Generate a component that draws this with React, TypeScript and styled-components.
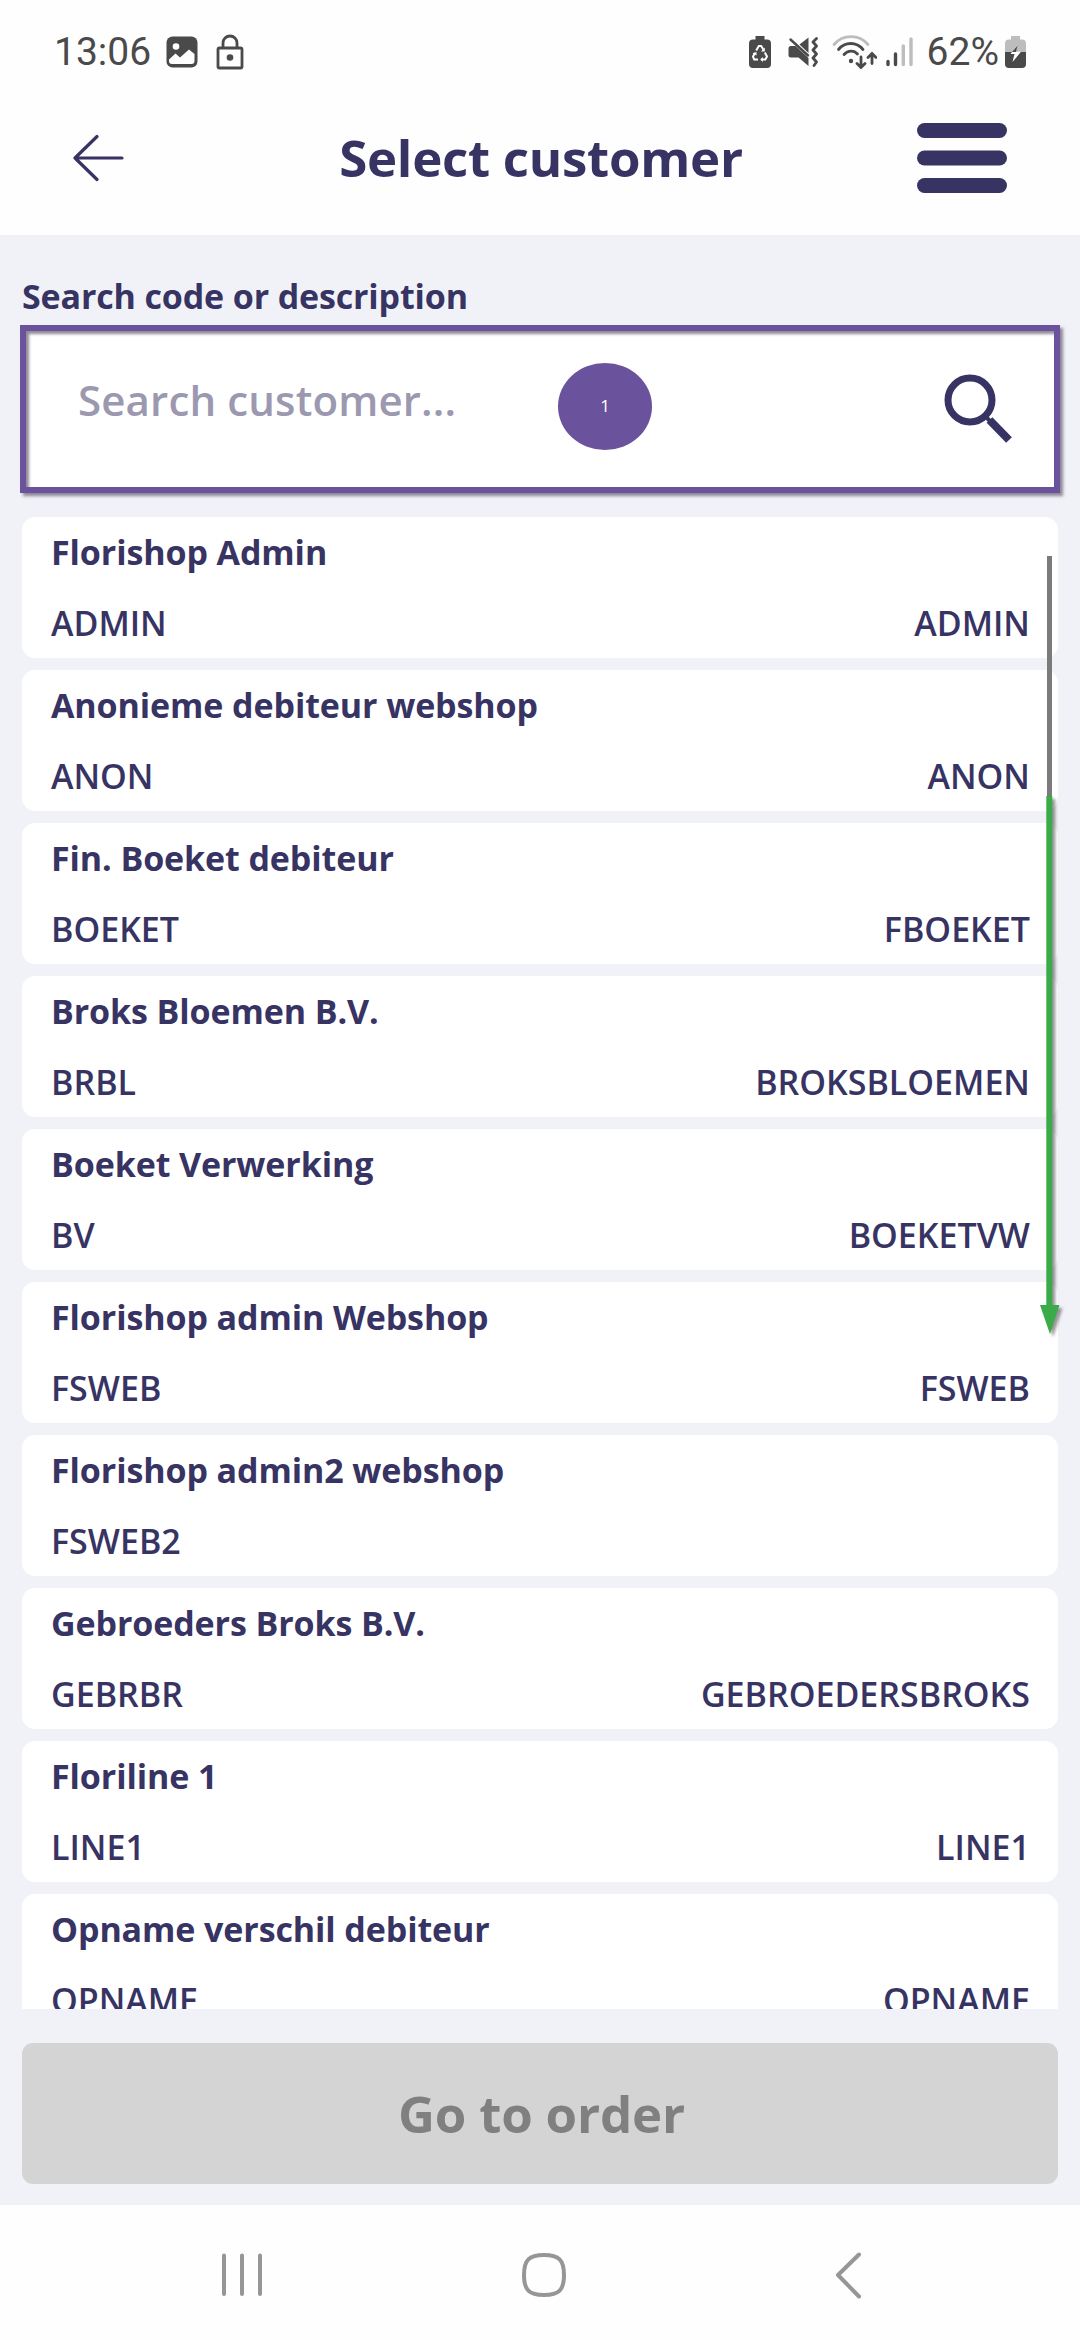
import React from 'react';
import styled, { createGlobalStyle } from 'styled-components';

const ink = '#373363';
const purple = '#6b529c';
const status = '#4a4a4a';
const faded = '#bdbdbd';

const GlobalStyle = createGlobalStyle`
  * { box-sizing: border-box; }
  body { margin: 0; background: #fff; }
`;

const Screen = styled.div`
  width: 1080px;
  height: 2340px;
  display: flex;
  flex-direction: column;
  overflow: hidden;
  background: #fefefe;
  color: ${ink};
  font-family: 'Open Sans', 'Noto Sans', sans-serif;
`;

const StatusBar = styled.div`
  height: 103px;
  padding: 0 54px 0 54px;
  display: flex;
  align-items: center;
  justify-content: space-between;
  font-family: Roboto, sans-serif;
  font-size: 39px;
  line-height: 48px;
  color: ${status};
`;

const StatusGroup = styled.div`
  display: flex;
  align-items: center;
  svg { display: block; flex: none; }
`;

const Spacer = styled.span<{ $w: number }>`
  width: ${(p) => p.$w}px;
  flex: none;
`;

const TitleBar = styled.header`
  height: 132px;
  padding: 0 73px 22px;
  display: flex;
  align-items: center;
  justify-content: space-between;
`;

const IconButton = styled.button`
  width: 90px;
  height: 72px;
  padding: 0;
  border: 0;
  background: none;
  display: flex;
  align-items: center;
`;

const Title = styled.h1`
  margin: 0 0 2px 2px;
  font-size: 51px;
  line-height: 70px;
  font-weight: 700;
  letter-spacing: -0.27px;
`;

const Main = styled.main`
  height: 1970px;
  padding: 42px 22px 21px;
  display: flex;
  flex-direction: column;
  background: #f1f2f8;
`;

const Label = styled.label`
  height: 48px;
  font-size: 34px;
  line-height: 38px;
  font-weight: 700;
  letter-spacing: -0.14px;
`;

const SearchBox = styled.div`
  position: relative;
  height: 168px;
  margin: 0 -2px;
  padding: 0 42px 0 52px;
  border: 6px solid ${purple};
  background: #fff;
  box-shadow: 3px 3px 3px rgba(70, 60, 80, 0.6), inset 3px 3px 3px rgba(70, 60, 80, 0.6);
  display: flex;
  justify-content: space-between;
`;

const Placeholder = styled.span`
  padding-top: 40px;
  font-size: 42px;
  line-height: 58px;
  font-weight: 560;
  letter-spacing: 0.15px;
  color: #9b98b0;
`;

const SearchIcon = styled.svg`
  display: block;
  margin-top: 43px;
`;

const Marker = styled.span`
  position: absolute;
  left: 532px;
  top: 32px;
  width: 94px;
  height: 87px;
  padding-bottom: 2px;
  border-radius: 50%;
  background: ${purple};
  color: #fff;
  font-size: 17px;
  font-weight: 500;
  display: flex;
  align-items: center;
  justify-content: center;
`;

const ListArea = styled.section`
  position: relative;
  height: 1492px;
  margin-top: 24px;
`;

const List = styled.ul`
  height: 100%;
  margin: 0;
  padding: 0;
  overflow: hidden;
  list-style: none;
  display: flex;
  flex-direction: column;
  gap: 12px;
`;

const Card = styled.li`
  flex: none;
  height: 141px;
  padding: 12px 28px 0 29px;
  border-radius: 13px;
  background: #fff;
  font-size: 34px;
  line-height: 46px;
`;

const Name = styled.div`
  height: 71px;
  font-weight: 700;
  letter-spacing: -0.1px;
`;

const Codes = styled.div`
  display: flex;
  justify-content: space-between;
  font-weight: 550;
`;

const ScrollThumb = styled.div`
  position: absolute;
  left: 1025px;
  top: 39px;
  width: 5px;
  height: 242px;
  background: #7b7b7b;
`;

const ScrollArrow = styled.svg`
  position: absolute;
  left: 1016px;
  top: 278px;
  filter: drop-shadow(3px 3px 1.5px rgba(70, 60, 70, 0.55));
`;

const OrderButton = styled.button`
  height: 141px;
  margin-top: 34px;
  padding: 0 0 2px 3px;
  border: 0;
  border-radius: 11px;
  background: #d4d4d4;
  color: #808080;
  font-family: inherit;
  font-size: 51px;
  font-weight: 700;
  letter-spacing: -0.2px;
`;

const NavBar = styled.nav`
  flex: 1;
  display: flex;
  justify-content: space-between;
  padding: 46px 217px 0 220px;
`;

const HomeIcon = styled.svg`
  margin-right: 11px;
`;

const customers: [string, string, string][] = [
  ['Florishop Admin', 'ADMIN', 'ADMIN'],
  ['Anonieme debiteur webshop', 'ANON', 'ANON'],
  ['Fin. Boeket debiteur', 'BOEKET', 'FBOEKET'],
  ['Broks Bloemen B.V.', 'BRBL', 'BROKSBLOEMEN'],
  ['Boeket Verwerking', 'BV', 'BOEKETVW'],
  ['Florishop admin Webshop', 'FSWEB', 'FSWEB'],
  ['Florishop admin2 webshop', 'FSWEB2', ''],
  ['Gebroeders Broks B.V.', 'GEBRBR', 'GEBROEDERSBROKS'],
  ['Floriline 1', 'LINE1', 'LINE1'],
  ['Opname verschil debiteur', 'OPNAME', 'OPNAME'],
];

const PictureIcon = () => (
  <svg width="32" height="32" viewBox="0 0 32 32">
    <rect x="0.5" y="0.5" width="31" height="31" rx="6" fill={status} />
    <circle cx="10" cy="10.5" r="3.3" fill="#fff" />
    <path d="M3 23.5 L9.5 17.5 L14 21.5 L23 13.5 L28.5 18 V25 Q28.5 28 25.5 28 H6 Q3 28 3 25 Z" fill="#fff" />
  </svg>
);

const LockIcon = () => (
  <svg width="28" height="36" viewBox="0 0 28 36" fill="none" stroke={status} strokeWidth="2.8">
    <rect x="2" y="14" width="24" height="20" rx="1.5" />
    <path d="M7 14 V9 A7 7 0 0 1 21 9 V14" />
    <circle cx="14" cy="23.5" r="3.3" fill={status} stroke="none" />
  </svg>
);

const RecycleBatteryIcon = () => (
  <svg width="22" height="32" viewBox="0 0 22 32">
    <path d="M6.5 0 H15.5 V3.5 H18 Q22 3.5 22 7.5 V28 Q22 32 18 32 H4 Q0 32 0 28 V7.5 Q0 3.5 4 3.5 H6.5 Z" fill={status} />
    <g fill="none" stroke="#fff" strokeWidth="2">
      <path d="M7.2 14.5 L9.8 10 H12.2 L14.3 13.6" />
      <path d="M15.8 16.5 L18 20.5 L16.3 23.5 H12.8" />
      <path d="M9 23.5 H5.2 L4 20.5 L6 17" />
    </g>
    <path d="M15.8 11.5 V15.5 H12 Z M13.8 21 V26 L11.2 23.5 Z M3.5 17.2 L7.5 16 V19.5 Z" fill="#fff" />
  </svg>
);

const MutedIcon = () => (
  <svg width="30" height="30" viewBox="0 0 30 30">
    <path d="M3 9 H7.5 L20.5 21 V29 L10.5 20.5 H3 Q0.5 20.5 0.5 18 V11.5 Q0.5 9 3 9 Z M11.5 7.5 L20.5 0.5 V16 Z" fill={status} />
    <path d="M2.5 2.5 L20 18.5" stroke={status} strokeWidth="2.4" strokeLinecap="round" />
    <path d="M28.5 1.5 L25 5 L28.5 9 L25 13 L28.5 17 L25 21 L28.5 25 L26 28.5" fill="none" stroke={status} strokeWidth="2.8" strokeLinejoin="round" strokeLinecap="round" />
  </svg>
);

const WifiIcon = () => (
  <svg width="45" height="34" viewBox="0 0 45 34" fill="none" strokeWidth="2.8" strokeLinecap="round">
    <path d="M2 9.5 C11 -1 27 -1 36 9.5" stroke={faded} />
    <g stroke={status}>
      <path d="M6.5 14.5 C13 6.5 24.5 6.5 31 14.5" />
      <path d="M12 19.5 C16 15 22 15 25.5 19" />
      <path d="M29 22 V32 M25 28.5 L29 32.5 L33 28.5" />
      <path d="M40 28.5 V19 M36 22.5 L40 18.5 L44 22.5" />
    </g>
    <circle cx="19" cy="26" r="2.2" fill={status} />
  </svg>
);

const SignalIcon = () => (
  <svg width="27" height="30" viewBox="0 0 27 30" strokeWidth="3.4" strokeLinecap="round">
    <path d="M2 24.5 V27.5 M9.5 17 V27.5" stroke={status} />
    <path d="M17.3 9 V27.5 M25 2 V27.5" stroke={faded} />
  </svg>
);

const ChargingIcon = () => (
  <svg width="21" height="32" viewBox="0 0 21 32">
    <path d="M6 0 H15 V3.5 H17 Q21 3.5 21 7.5 V16 H0 V7.5 Q0 3.5 4 3.5 H6 Z" fill={faded} />
    <path d="M0 16 H21 V28 Q21 32 17 32 H4 Q0 32 0 28 Z" fill={status} />
    <path d="M12 9.5 L5.5 18 H9.5 L7.5 26 L16 15.8 H11 Z" fill="#fff" />
    <path d="M12.5 9.5 L7 16 H11 Z" fill={status} />
  </svg>
);

export default function App() {
  return (
    <>
      <GlobalStyle />
      <Screen>
        <StatusBar>
          <StatusGroup>
            <span>13:06</span>
            <Spacer $w={15} />
            <PictureIcon />
            <Spacer $w={18} />
            <LockIcon />
          </StatusGroup>
          <StatusGroup>
            <RecycleBatteryIcon />
            <Spacer $w={17} />
            <MutedIcon />
            <Spacer $w={14} />
            <WifiIcon />
            <Spacer $w={9} />
            <SignalIcon />
            <Spacer $w={14} />
            <span>62%</span>
            <Spacer $w={6} />
            <ChargingIcon />
          </StatusGroup>
        </StatusBar>

        <TitleBar>
          <IconButton aria-label="Back">
            <svg width="52" height="48" viewBox="0 0 52 48" fill="none" stroke={ink} strokeWidth="3.2" strokeLinecap="round" strokeLinejoin="round">
              <path d="M49 24 H2 M24 2.5 L2 24 L24 45.5" />
            </svg>
          </IconButton>
          <Title>Select customer</Title>
          <IconButton aria-label="Menu">
            <svg width="90" height="70" viewBox="0 0 90 70" fill={ink}>
              <rect y="0" width="90" height="15" rx="7.5" />
              <rect y="27.5" width="90" height="15" rx="7.5" />
              <rect y="55" width="90" height="15" rx="7.5" />
            </svg>
          </IconButton>
        </TitleBar>

        <Main>
          <Label>Search code or description</Label>
          <SearchBox>
            <Placeholder>Search customer...</Placeholder>
            <Marker>1</Marker>
            <SearchIcon width="68" height="70" viewBox="0 0 68 70" fill="none" stroke={ink}>
              <circle cx="26" cy="26" r="22" strokeWidth="7" />
              <path d="M45.5 46 L65 66" strokeWidth="8" />
              <path d="M40 41 L47 48" strokeWidth="4" />
            </SearchIcon>
          </SearchBox>

          <ListArea>
            <List>
              {customers.map(([name, code, search]) => (
                <Card key={code}>
                  <Name>{name}</Name>
                  <Codes>
                    <span>{code}</span>
                    <span>{search}</span>
                  </Codes>
                </Card>
              ))}
            </List>
            <ScrollThumb />
            <ScrollArrow width="24" height="545" viewBox="0 0 24 545" fill="#3bab49">
              <path d="M8.3 1 H14.3 V510 H21.5 L12 539 L2 510 H8.3 Z" />
            </ScrollArrow>
          </ListArea>

          <OrderButton>Go to order</OrderButton>
        </Main>

        <NavBar>
          <svg width="44" height="48" viewBox="0 0 44 48" stroke="#969696" strokeWidth="4" strokeLinecap="round">
            <path d="M4 4.5 V43 M22 4.5 V43 M40 4.5 V43" />
          </svg>
          <HomeIcon width="46" height="48" viewBox="0 0 46 48" fill="none" stroke="#969696" strokeWidth="4">
            <path d="M23 4 C38 4 43 9 43 24 C43 39 38 44 23 44 C8 44 3 39 3 24 C3 9 8 4 23 4 Z" />
          </HomeIcon>
          <svg width="28" height="48" viewBox="0 0 28 48" fill="none" stroke="#969696" strokeWidth="4" strokeLinecap="round" strokeLinejoin="round">
            <path d="M24 3.5 L3 24 L24 45.5" />
          </svg>
        </NavBar>
      </Screen>
    </>
  );
}
